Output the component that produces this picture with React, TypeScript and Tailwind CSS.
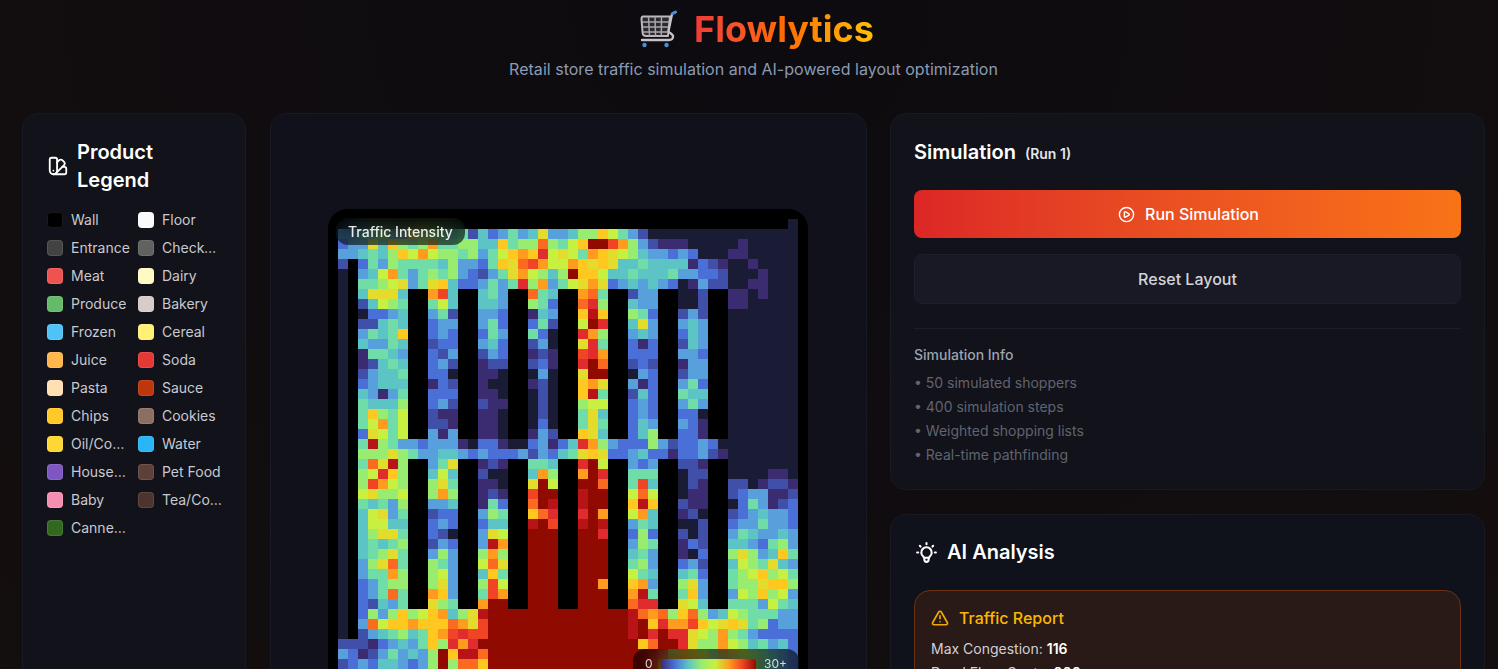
import { TriangleAlert, SwatchBook, CirclePlay } from "lucide-react";
import { TbBulb } from "react-icons/tb";

const PAL: Record<string, string> = {
  ".": "#1a1c36",
  "#": "#000000",
  b: "#3b2b70",
  c: "#4050a8",
  d: "#4a70d8",
  e: "#58a0dc",
  f: "#5cc4c4",
  g: "#70dca8",
  h: "#98ec70",
  i: "#c8f040",
  j: "#e4dc2c",
  k: "#ffc820",
  l: "#ff9c20",
  m: "#fa6a20",
  n: "#f04424",
  o: "#e02c2c",
  p: "#b81418",
  q: "#900a00",
};

const Q14 = "q".repeat(14);
const Q15 = "q".repeat(15);

// one aisle row: c2-6, c9-11, c14-16, c19-21, c24-26, c29-31, c34-36, c39-45
const a = (p: string[]) => {
  const r = (p[7] || "").padEnd(7, ".");
  return `.#${p[0]}##${p[1]}##${p[2]}##${p[3]}##${p[4]}##${p[5]}##${p[6]}##${r}`;
};

const ROWS: string[] = [
  "#".repeat(45) + ".",
  "eefgheekhhgfg" + "cfdegefjee" + "fhhkigec",
  "deejfkhghlggh" + "hffkghhmhg" + "ikqqnlhecbbb" + "....." + "b",
  "eefgfhkilihhg" + "hegiklkoij" + "iglkjihfeeded" + "..." + "bb",
  "c#dgehggggfhe" + "edgkjmnlii" + "lkjkjffgffffbdcb" + ".." + "b",
  ".#efilgeghghe" + "dcegjlihfh" + "qkkiffgfffgeeddc" + "..." + "b",
  ".#gghijegjkfd" + "degegohleg" + "ijljdefefed.becc" + ".." + "bb",
  a(["fjjjf", "lnf", "fge", "mgf", "lmg", "cee", "..c", "bb.b"]),
  a(["cfihg", "gif", "ffe", "hgd", "moh", "fee", "..c", "bb"]),
  a([".ddef", "egc", "eed", "bfe", "kpk", "hgd", "cec"]),
  a(["ccfgf", "dee", "egd", "dgc", "iqo", "fje", "efe"]),
  a(["egfgk", "ded", "dge", "gd.", "olh", "efe", "dfe"]),
  a(["feegf", "cdd", "efd", "ce.", "jog", "dbd", "cfe"]),
  a(["bggfe", "dce", "ced", "bcb", "nol", "ddd", "eed"]),
  a(["bcfgf", "dec", "bcc", "cdb", "oqm", "cdc", "bee"]),
  a(["ceffg", "dd.", "bb.", ".e.", "jqq", ".ed", "cee"]),
  a(["defff", "bdc", "b..", "bc.", "klj", "ebd", "egd"]),
  a(["febeg", "ddd", "bb.", ".c.", "kpg", "cfd", "gff"]),
  a(["gfffh", "dec", "cbb", ".c.", "hii", "ded", "ege"]),
  a(["gkhgi", "cbb", "bb.", ".c.", "gjf", "ded", "dd."]),
  a(["gilgi", "ccb", "bb.", ".d.", "gjg", "dfe", "edb"]),
  a(["djigi", "ebe", "bb.", "bec", "kjf", "dfh", "ddb"]),
  ".#gphgeedeee" + "b." + "ddb" + ".." + "deb" + "df" + "olh" + "ed" + "ddh" + "ec" + "dded",
  ".#hhhjhgeeffed" + "edddecedfg" + "jkj" + "dd" + "efd" + "db" + "dde" + "cb",
  a(["gmjph", "egj", "bcb", "ggf", "oqi", "ede", "ccb"]),
  a(["hiokh", "fif", "c..", "flh", "lqo", "ggg", ".cc", "....bb."]),
  a(["hnlih", "hjg", "bb.", "jqi", "qqm", "gnf", ".cb", "cc.bccb"]),
  a(["ijhhi", "hlh", "bcb", "nqq", "pqq", "imi", ".bb", "cdeebbc"]),
  a(["gfgeh", "eef", "bgd", "mqp", "pqq", "kpk", "cbb", ".dgebcd"]),
  a(["fijeg", "cdd", "ehg", "kmo", "oql", "ilf", "bc.", "cdefeed"]),
  a(["fiiff", "ded", "dff", "pqn", "pqp", "egf", "..c", "deegeed"]),
  a(["fhjjg", "dc.", "eji", "qqq", "qqo", "dhd", "c.c", "egfeefe"]),
  a(["fgfgh", "ced", "epl", "qqq", "qqq", "ehg", "bdc", "ffedghe"]),
  a(["fghjg", "ehe", "hlh", "qqq", "qqq", "fge", "b.d", "hjhefkg"]),
  a(["ehjmg", "hge", "imj", "qqq", "qqq", "ghe", "dec", "fihgjfe"]),
  a(["egglh", "hie", "fkg", "qqq", "qqq", "igf", "fgd", "ghikhig"]),
  a(["deghh", "hje", "hni", "qqq", "qql", "kle", "hje", "ghhjkkh"]),
  a(["degmg", "lke", "gnl", "qqq", "qqq", "lpg", "gke", "eihkhie"]),
  a(["dcfeg", "jhg", "lqq", "qqq", "qqq", "moo", "jif", "gggeigf"]),
  ".#dhehkhiklfhjp" + Q14 + "pmlmhkmhefihgggee",
  ".#emikklkkkmljn" + Q14 + "pqkollnkijkjghdee",
  ".#cefghfgklnonn" + Q14 + "pqoqoojihlhgedddd",
  "cccbdefegkholoq" + Q15 + "kmqqojhhlihfgefd",
  "edbcegefehqkppm" + Q15 + "qpohkjiglkihgfed",
  "cdedffedehqhmmk" + Q15 + "qoklnkihgfhigfed",
  "cdedffedehqhmmk" + Q15 + "qoklnkihgfhigfed",
];

const LEGEND: [string, string, string, string][] = [
  ["Wall", "#000000", "Floor", "#fafafa"],
  ["Entrance", "#424242", "Checkout", "#616161"],
  ["Meat", "#ef5350", "Dairy", "#fff9c4"],
  ["Produce", "#66bb6a", "Bakery", "#d7ccc8"],
  ["Frozen", "#4fc3f7", "Cereal", "#fff176"],
  ["Juice", "#ffb74d", "Soda", "#e53935"],
  ["Pasta", "#ffe0b2", "Sauce", "#bf360c"],
  ["Chips", "#ffca28", "Cookies", "#8d6e63"],
  ["Oil/Condiments", "#fdd835", "Water", "#29b6f6"],
  ["Household", "#7e57c2", "Pet Food", "#5d4037"],
  ["Baby", "#f48fb1", "Tea/Coffee", "#4e342e"],
];

function Item({ label, color }: { label: string; color: string }) {
  return (
    <div className="flex items-center gap-2 min-w-0">
      <span className="w-4 h-4 shrink-0 rounded-[4px] border border-white/10" style={{ backgroundColor: color }} />
      <span className="truncate text-sm leading-5 text-[#c9c9d0]">{label}</span>
    </div>
  );
}

function Cart() {
  return (
    <svg width="40" height="38" viewBox="0 0 40 38" fill="none" className="shrink-0">
      <path d="M4 6.5 H31 L29 26 H7 Q3.5 26 3.5 22 L2.5 9 Q2.5 6.5 4 6.5 Z" fill="#2a292c" stroke="#bdb9c0" strokeWidth="2" strokeLinejoin="round" />
      <path d="M3 12 H30.5 M3.5 17 H30 M4 22 H29.5 M9.5 6.5 L10.5 26 M16 6.5 L16.5 26 M22.5 6.5 L22.3 26" stroke="#a9a6ac" strokeWidth="1.5" />
      <path d="M35 3 L33 4 L29.5 21 C29.5 23 33 23 34 26 C34.5 29 32 30 30 30 H3" stroke="#c6c2c9" strokeWidth="2.4" strokeLinecap="round" fill="none" />
      <path d="M33.5 3.5 L36.5 2" stroke="#4a90d9" strokeWidth="3" strokeLinecap="round" />
      <circle cx="5.5" cy="35" r="2.2" fill="#4a90d9" />
      <circle cx="27.5" cy="35" r="2.2" fill="#4a90d9" />
    </svg>
  );
}

export default function App() {
  return (
    <div
      className="h-[669px] w-full overflow-hidden bg-[radial-gradient(ellipse_at_top,#0d0b10,#140e0e)] text-white"
      style={{ fontFamily: "Inter, 'Noto Sans', sans-serif" }}
    >
      <div className="w-[1507px] px-[22px]">
        <header className="flex h-[113px] flex-col items-center">
          <div className="ml-[6px] mt-[9px] flex h-10 items-center gap-[15px]">
            <Cart />
            <h1 className="bg-gradient-to-r from-[#ef3b36] via-[#ff6a00] to-[#ffc107] bg-clip-text text-[36px] font-bold leading-10 text-transparent">
              Flowlytics
            </h1>
          </div>
          <p className="mt-2 text-base leading-6 tracking-[0.02px] text-[#8a9bb2]">
            Retail store traffic simulation and AI-powered layout optimization
          </p>
        </header>

        <div className="grid grid-cols-[224px_596px_595px] gap-6">
          <aside className="h-[700px] rounded-2xl border border-[#181922] bg-[#11121a] p-6">
            <div className="flex items-center gap-2">
              <SwatchBook className="h-[22px] w-[22px] shrink-0 text-white" strokeWidth={2} />
              <h2 className="text-xl font-semibold leading-7 text-white">Product Legend</h2>
            </div>
            <div className="mt-4 grid grid-cols-[83px_85.5px] gap-2">
              {LEGEND.map(([l, c, r, rc]) => (
                <div key={l} className="contents">
                  <Item label={l} color={c} />
                  <Item label={r} color={rc} />
                </div>
              ))}
              <Item label="Canned Goods" color="#33691e" />
            </div>
          </aside>

          <main className="flex h-[700px] w-[597px] justify-center rounded-2xl border border-[#181922] bg-[#10111a] pr-px pt-[95px]">
            <div className="relative h-[480px] w-[480px] rounded-[20px] border-[10px] border-black bg-black">
              <svg width="460" height="460" viewBox="0 0 460 460" shapeRendering="crispEdges" className="block">
                <rect width="460" height="460" fill={PAL["."]} />
                {ROWS.flatMap((row, y) =>
                  row.padEnd(46, ".").split("").map((ch, x) =>
                    ch === "." ? null : <rect key={`${x}-${y}`} x={x * 10} y={y * 10} width="10" height="10" fill={PAL[ch]} />
                  )
                )}
              </svg>
              <div className="absolute left-[-2px] top-[-1px] rounded-xl bg-black/55 px-3 py-[3.5px] text-sm font-medium leading-5 text-white/90 backdrop-blur-md">
                Traffic Intensity
              </div>
              <div className="absolute left-[295px] top-[430px] flex h-10 w-[166px] items-start gap-2 rounded-xl bg-black/60 px-3 pt-[7px] text-xs leading-4 text-white/80 backdrop-blur-sm">
                <span>0</span>
                <span className="mt-[3px] h-3 w-24 rounded-[3px] bg-[linear-gradient(to_right,#3b2b70,#4a70d8,#5cc4c4,#98ec70,#c8f040,#ff9c20,#f04424,#900a00)]" />
                <span>30+</span>
              </div>
            </div>
          </main>

          <div className="flex flex-col gap-6">
            <section className="rounded-2xl border border-[#181922] bg-[#11121a] px-[23px] pb-[22px] pt-6">
              <div className="flex items-baseline gap-[9px]">
                <h2 className="text-xl font-semibold leading-7 text-white">Simulation</h2>
                <span className="text-sm font-semibold text-[#e5e5ea]">(Run 1)</span>
              </div>
              <button className="mt-[24px] flex h-12 w-full items-center justify-center gap-[10px] rounded-lg bg-gradient-to-r from-[#dc2626] to-[#f97316] pl-[2px] text-base font-medium text-white">
                <CirclePlay className="h-[17px] w-[17px]" strokeWidth={2} />
                Run Simulation
              </button>
              <button className="mt-4 h-[50px] w-full rounded-lg border border-[#1e1f2a] bg-[#181924] text-base font-medium text-[#d4d4d8]">
                Reset Layout
              </button>
              <div className="mt-6 border-t border-[#1c1d27] pt-4">
                <h3 className="text-sm font-medium leading-5 text-[#9ca3af]">Simulation Info</h3>
                <ul className="mt-[6px] text-sm leading-6 text-[#60646f]">
                  <li>• 50 simulated shoppers</li>
                  <li>• 400 simulation steps</li>
                  <li>• Weighted shopping lists</li>
                  <li>• Real-time pathfinding</li>
                </ul>
              </div>
            </section>

            <section className="rounded-2xl border border-[#181922] bg-[#0f111b] px-[23px] pt-[23px]">
              <div className="flex items-center gap-2">
                <TbBulb className="h-[25px] w-[25px] text-white" />
                <h2 className="text-xl font-semibold leading-7 text-white">AI Analysis</h2>
              </div>
              <div className="mt-6 rounded-2xl border border-[#6a3210] bg-[#2a1a17] px-4 pb-4 pt-[15px]">
                <div className="flex items-center gap-[10px]">
                  <TriangleAlert className="h-[18px] w-[18px] text-[#f0a800]" strokeWidth={2.2} />
                  <h3 className="text-base font-medium leading-6 text-[#fbb800]">Traffic Report</h3>
                </div>
                <p className="mt-[7px] text-sm leading-6 text-[#d0d0d4]">
                  Max Congestion: <b className="font-semibold text-white">116</b>
                </p>
                <p className="text-sm leading-6 text-[#d0d0d4]">
                  Dead Floor Spots: <b className="font-semibold text-white">000</b>
                </p>
              </div>
            </section>
          </div>
        </div>
      </div>
    </div>
  );
}
